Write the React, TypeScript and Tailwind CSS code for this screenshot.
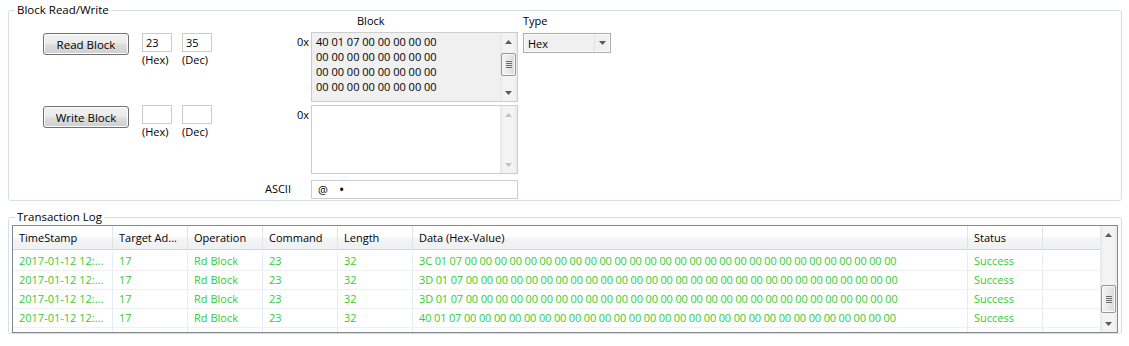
import React from "react";

const Tri = ({ up = false, color }: { up?: boolean; color: string }) => (
    <svg width="7" height="4" viewBox="0 0 7 4">
        <path d={up ? "M0 4L3.5 0L7 4Z" : "M0 0H7L3.5 4Z"} fill={color} />
    </svg>
);

const ScrollBar = ({ thumb, disabled = false }: { thumb?: string; disabled?: boolean }) => {
    const color = disabled ? "#c2c2c2" : "#5a5a5a";
    return (
        <div className="flex w-[17px] shrink-0 flex-col bg-[linear-gradient(90deg,#e6e6e6,#f3f3f3_20%,#f3f3f3_80%,#ebebeb)]">
            <div className="flex h-[17px] items-center justify-center">
                <Tri up color={color} />
            </div>
            <div className="flex-1">
                {thumb && (
                    <div
                        className={`mx-auto flex w-[15px] flex-col items-center justify-center gap-[1px] rounded-[2px] border border-[#979797] bg-[linear-gradient(90deg,#f4f4f4,#e8e8e8_50%,#d9d9d9)] shadow-[inset_0_0_0_1px_#fafafa] ${thumb}`}
                    >
                        <span className="h-px w-[6px] bg-[#6a6a6a]" />
                        <span className="h-px w-[6px] bg-[#6a6a6a]" />
                        <span className="h-px w-[6px] bg-[#6a6a6a]" />
                        <span className="h-px w-[6px] bg-[#6a6a6a]" />
                    </div>
                )}
            </div>
            <div className="flex h-[17px] items-center justify-center">
                <Tri color={color} />
            </div>
        </div>
    );
};

const WinButton = ({ label, className = "" }: { label: string; className?: string }) => (
    <div
        className={`flex h-[22px] w-[86px] shrink-0 items-center justify-center rounded-[3px] border border-[#707070] bg-[linear-gradient(#f2f2f2_0%,#ebebeb_45%,#dddddd_55%,#cfcfcf_100%)] text-[11.5px] shadow-[inset_0_0_0_1px_#fcfcfc] ${className}`}
    >
        {label}
    </div>
);

const IndexField = ({ value, label, className = "" }: { value: string; label: string; className?: string }) => (
    <div className={`flex flex-col ${className}`}>
        <div className="h-[19px] w-[30px] border border-[#cdcdcd] bg-white pl-[3px] leading-[17px]">{value}</div>
        <div>{label}</div>
    </div>
);

const blockLines = [
    "40 01 07 00 00 00 00 00",
    "00 00 00 00 00 00 00 00",
    "00 00 00 00 00 00 00 00",
    "00 00 00 00 00 00 00 00",
];

const zeros = Array(29).fill("00").join(" ");

const logRows = [
    ["2017-01-12 12:...", "17", "Rd Block", "23", "32", `3C 01 07 ${zeros}`, "Success", ""],
    ["2017-01-12 12:...", "17", "Rd Block", "23", "32", `3D 01 07 ${zeros}`, "Success", ""],
    ["2017-01-12 12:...", "17", "Rd Block", "23", "32", `3D 01 07 ${zeros}`, "Success", ""],
    ["2017-01-12 12:...", "17", "Rd Block", "23", "32", `40 01 07 ${zeros}`, "Success", ""],
    ["", "", "", "", "", "", "", ""],
];

const headers = ["TimeStamp", "Target Ad...", "Operation", "Command", "Length", "Data (Hex-Value)", "Status", ""];

export default function App() {
    return (
        <div className="h-[346px] w-[1129px] overflow-hidden bg-white pl-[8px] pt-[2px] font-['Open_Sans','Noto_Sans',sans-serif] text-[11px] leading-[15px] text-black">
            {/* Block read / write group */}
            <fieldset className="h-[199px] w-[1114px] rounded-[3px] border border-[#d5dfe5]">
                <legend className="ml-[6px] px-[2px] text-[11.5px] leading-[16px]">Block Read/Write</legend>
                <div className="flex items-start">
                    <div className="ml-[34px] mt-[15px] flex w-[169px] flex-col">
                        <div className="flex h-[72px] items-start">
                            <WinButton label="Read Block" />
                            <IndexField value="23" label="(Hex)" className="ml-[13px]" />
                            <IndexField value="35" label="(Dec)" className="ml-[10px]" />
                        </div>
                        <div className="flex items-start">
                            <WinButton label="Write Block" className="mt-[1px]" />
                            <IndexField value="" label="(Hex)" className="ml-[13px]" />
                            <IndexField value="" label="(Dec)" className="ml-[10px]" />
                        </div>
                    </div>

                    <div className="-mt-[5px] flex flex-col">
                        <div className="pl-[145px]">Block</div>
                        <div className="mt-[4px] flex">
                            <div className="w-[99px] pr-[2px] pt-[2px] text-right">0x</div>
                            <div className="flex h-[70px] w-[207px] border border-[#cdcdcd] bg-[#f0f0f0]">
                                <div className="flex-1 pl-[4px] pt-px">
                                    {blockLines.map((l, i) => (
                                        <div key={i}>{l}</div>
                                    ))}
                                </div>
                                <ScrollBar thumb="mt-[3px] h-[23px]" />
                            </div>
                        </div>
                        <div className="mt-[3px] flex">
                            <div className="w-[99px] pr-[2px] pt-[2px] text-right">0x</div>
                            <div className="flex h-[69px] w-[207px] border border-[#cdcdcd] bg-white">
                                <div className="flex-1" />
                                <ScrollBar disabled />
                            </div>
                        </div>
                        <div className="mt-[6px] flex">
                            <div className="w-[99px] pr-[20px] pt-px text-right">ASCII</div>
                            <div className="flex h-[19px] w-[207px] items-center border border-[#cdcdcd] bg-white pl-[6px]">
                                @<span className="ml-[11px] text-[14px] leading-[15px]">•</span>
                            </div>
                        </div>
                    </div>

                    <div className="-mt-[5px] ml-[5px] flex flex-col">
                        <div>Type</div>
                        <div className="mt-[5px] flex h-[20px] w-[88px] items-center border border-[#acacac] bg-[#f0f0f0] shadow-[inset_0_0_0_1px_#fbfbfb]">
                            <span className="flex-1 pl-[4px]">Hex</span>
                            <div className="flex h-full w-[16px] items-center justify-center border-l border-[#e3e3e3]">
                                <Tri color="#5a5a5a" />
                            </div>
                        </div>
                    </div>
                </div>
            </fieldset>

            {/* Transaction log group */}
            <fieldset className="mt-[8px] h-[125px] w-[1114px] rounded-[3px] border border-[#d5dfe5]">
                <legend className="ml-[6px] px-[2px] text-[11.5px] leading-[16px]">Transaction Log</legend>
                <div className="ml-[3px] flex h-[108px] w-[1106px] border border-[#828790]">
                    <div className="flex min-w-0 flex-1 flex-col overflow-hidden">
                        <div className="grid h-[24px] shrink-0 grid-cols-[100px_75px_75px_75px_75px_555px_75px_1fr] border-b border-[#d5d5d5] bg-[linear-gradient(#ffffff_0%,#ffffff_45%,#f3f4f6_55%,#eff0f2_100%)]">
                            {headers.map((h, i) => (
                                <div
                                    key={i}
                                    className="overflow-hidden whitespace-nowrap border-r border-[#e2e3e5] pl-[6px] leading-[23px] last:border-r-0"
                                >
                                    {h}
                                </div>
                            ))}
                        </div>
                        <div className="flex flex-col pt-[2px] text-[#32cd32]">
                            {logRows.map((row, r) => (
                                <div
                                    key={r}
                                    className="grid h-[19px] shrink-0 grid-cols-[100px_75px_75px_75px_75px_555px_75px_1fr] border-b border-[#f0f0f0]"
                                >
                                    {row.map((c, i) => (
                                        <div
                                            key={i}
                                            className={`overflow-hidden whitespace-nowrap border-r border-[#e5ecf6] pl-[6px] leading-[18px] last:border-r-0 ${i === 5 ? "tracking-[-0.15px]" : ""}`}
                                        >
                                            {c}
                                        </div>
                                    ))}
                                </div>
                            ))}
                        </div>
                    </div>
                    <ScrollBar thumb="mt-[42px] h-[28px]" />
                </div>
            </fieldset>
        </div>
    );
}
